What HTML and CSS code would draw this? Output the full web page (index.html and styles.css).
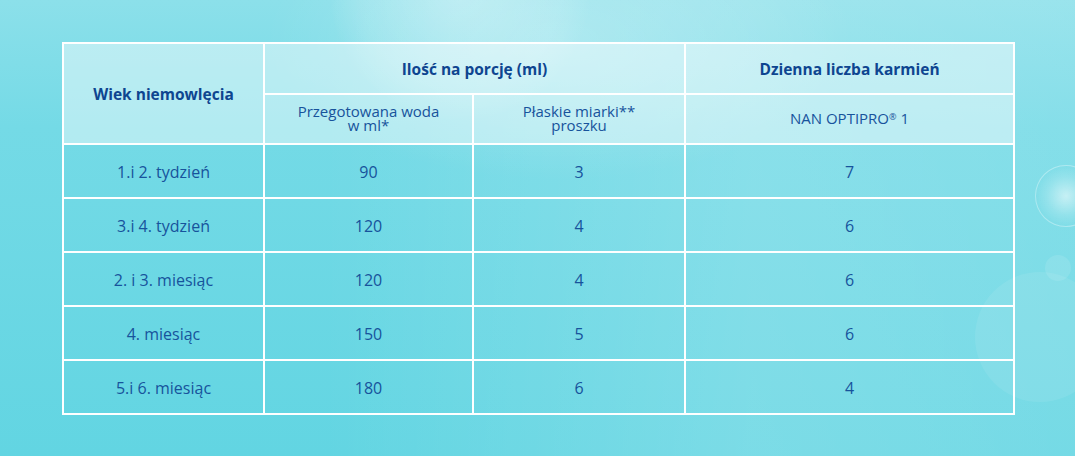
FILE: index.html
```html
<!DOCTYPE html>
<html lang="pl">
<head>
<meta charset="utf-8">
<link rel="stylesheet" href="styles.css">
</head>
<body>
<div class="page">
  <div class="flare flare-top"></div>
  <div class="flare flare-sun"></div>
  <div class="flare flare-ring"></div>
  <div class="flare flare-big"></div>
  <table class="feed">
    <colgroup>
      <col class="c1"><col class="c2"><col class="c3"><col class="c4">
    </colgroup>
    <thead>
      <tr class="h1">
        <th rowspan="2" class="strong">Wiek niemowlęcia</th>
        <th colspan="2" class="strong">Ilość na porcję (ml)</th>
        <th class="strong">Dzienna liczba karmień</th>
      </tr>
      <tr class="h2">
        <th>Przegotowana woda<br>w ml*</th>
        <th>Płaskie miarki**<br>proszku</th>
        <th>NAN OPTIPRO<sup>®</sup> 1</th>
      </tr>
    </thead>
    <tbody>
      <tr><td>1.i 2. tydzień</td><td>90</td><td>3</td><td>7</td></tr>
      <tr><td>3.i 4. tydzień</td><td>120</td><td>4</td><td>6</td></tr>
      <tr><td>2. i 3. miesiąc</td><td>120</td><td>4</td><td>6</td></tr>
      <tr><td>4. miesiąc</td><td>150</td><td>5</td><td>6</td></tr>
      <tr><td>5.i 6. miesiąc</td><td>180</td><td>6</td><td>4</td></tr>
    </tbody>
  </table>
</div>
</body>
</html>
```
FILE: styles.css
```css
html, body {
  margin: 0;
  padding: 0;
}
body {
  width: 1075px;
  height: 456px;
  overflow: hidden;
  font-family: "Open Sans", "Noto Sans", sans-serif;
}
.page {
  position: relative;
  width: 1075px;
  height: 456px;
  box-sizing: border-box;
  padding: 42px 0 0 62px;
  background:
    radial-gradient(ellipse 420px 200px at 560px 40px, rgba(255,255,255,0.26), rgba(255,255,255,0) 70%),
    linear-gradient(90deg, rgba(255,255,255,0) 0%, rgba(255,255,255,0) 30%, rgba(255,255,255,0.16) 70%, rgba(255,255,255,0.12) 100%),
    linear-gradient(180deg, #8ce0ea 0%, #74dae6 28%, #62d5e2 100%);
}
.flare {
  position: absolute;
  border-radius: 50%;
  pointer-events: none;
}
.flare-top {
  left: 330px;
  top: -140px;
  width: 260px;
  height: 260px;
  background: radial-gradient(circle, rgba(255,255,255,0.32) 0%, rgba(255,255,255,0.12) 55%, rgba(255,255,255,0) 72%);
}
.flare-sun {
  left: 1035px;
  top: 165px;
  width: 60px;
  height: 60px;
  border: 1.5px solid rgba(255,255,255,0.35);
  background: radial-gradient(circle, rgba(255,255,255,0.55) 0%, rgba(255,255,255,0.15) 45%, rgba(255,255,255,0) 70%);
}
.flare-ring {
  left: 1045px;
  top: 255px;
  width: 26px;
  height: 26px;
  background: rgba(255,255,255,0.10);
}
.flare-big {
  left: 975px;
  top: 272px;
  width: 130px;
  height: 130px;
  background: rgba(255,255,255,0.08);
}
.feed {
  position: relative;
  border-collapse: collapse;
  width: 951px;
  table-layout: fixed;
  color: #17539c;
  font-size: 16px;
}
.c1 { width: 201px; }
.c2 { width: 209px; }
.c3 { width: 212px; }
.c4 { width: 329px; }
.feed th,
.feed td {
  border: 2px solid #ffffff;
  text-align: center;
  vertical-align: middle;
  padding: 0;
  font-weight: 400;
}
.feed thead th {
  background: rgba(255,255,255,0.45);
}
.feed th.strong {
  font-weight: 700;
  color: #0e4590;
  font-size: 15.5px;
}
.h1 { height: 51px; }
.h2 { height: 50px; }
.h2 th {
  line-height: 14px;
  font-size: 15px;
  padding-bottom: 2px;
}
.h2 sup {
  font-size: 9px;
  line-height: 0;
  vertical-align: 4px;
}
.feed tbody tr {
  height: 54px;
}
.feed tbody td {
  padding-top: 2px;
}
```
